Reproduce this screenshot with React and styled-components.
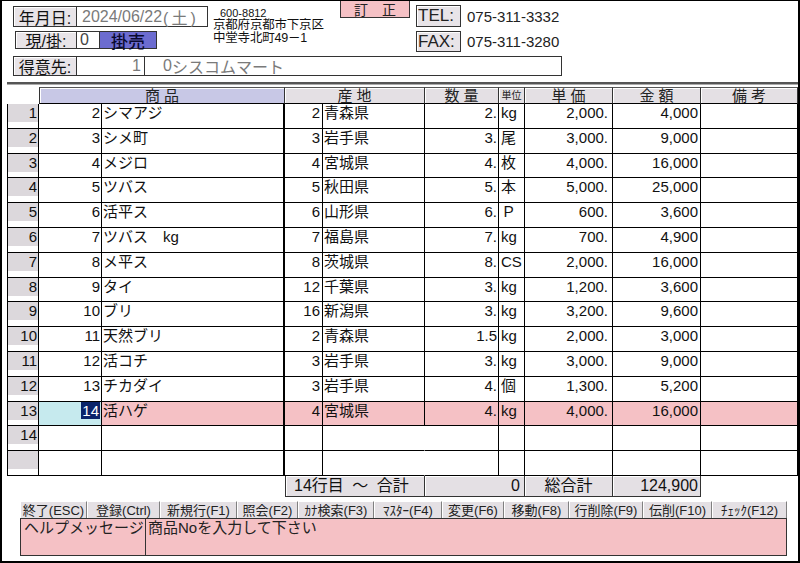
import React from 'react';
import styled, { createGlobalStyle } from 'styled-components';

const FONT = `"Liberation Sans", "Noto Sans CJK JP", sans-serif`;

const GlobalStyle = createGlobalStyle`
  html, body { margin: 0; padding: 0; background: #fff; }
  body { font-family: ${FONT}; }
  *, *::before, *::after { box-sizing: border-box; }
`;

const COLS = '32px 63px 183px 38px 102px 74px 26px 88px 88px 97px';

const Page = styled.div`
  width: 800px;
  height: 563px;
  border-style: solid;
  border-color: #000;
  border-width: 1px 2px 2px 2px;
  display: flex;
  flex-direction: column;
  font-family: ${FONT};
  color: #111;
  background: #fff;
  overflow: hidden;
`;

/* ---------- top area ---------- */
const UpperRow = styled.div`
  display: flex;
  align-items: flex-start;
  height: 51px;
`;

const LeftBlock = styled.div`
  display: flex;
  flex-direction: column;
  gap: 4px;
  width: 206px;
  padding: 5px 0 0 11px;
`;

const FieldRow = styled.div`
  display: flex;
  height: ${(p) => p.$h}px;
  margin-left: ${(p) => p.$ml || 0}px;
`;

const Label = styled.div`
  width: ${(p) => p.$w}px;
  height: 100%;
  background: #e8e4e8;
  border: 1px solid #333;
  box-shadow: inset 1px 1px 0 #fff;
  display: flex;
  align-items: center;
  justify-content: center;
  font-size: 16px;
  color: #111;
  white-space: nowrap;
`;

const ValueBox = styled.div`
  width: ${(p) => p.$w}px;
  height: 100%;
  background: ${(p) => p.$bg || '#fff'};
  border: 1px solid #333;
  border-left: none;
  display: flex;
  align-items: center;
  justify-content: ${(p) => p.$justify || 'flex-start'};
  padding: 0 ${(p) => p.$pr ?? 3}px 0 ${(p) => p.$pl ?? 3}px;
  font-size: ${(p) => p.$size || 16}px;
  font-weight: ${(p) => p.$weight || 400};
  color: ${(p) => p.$color || '#7a7a7a'};
  white-space: nowrap;
`;

const Paren = styled.span`
  letter-spacing: 3px;
  margin-left: 1px;
`;

const Address = styled.div`
  width: 127px;
  margin-left: 5px;
  padding-top: 6px;
  display: flex;
  flex-direction: column;
  color: #111;
  white-space: nowrap;
`;

const Zip = styled.div`
  font-size: 11px;
  line-height: 12px;
  padding-left: 7px;
`;

const AddrLine = styled.div`
  font-size: 12.5px;
  line-height: 13px;
  letter-spacing: -0.2px;
`;

const Correction = styled.div`
  width: 70px;
  height: 17px;
  background: #f5c1c5;
  border: 1px solid #333;
  border-top: none;
  display: flex;
  align-items: center;
  justify-content: center;
  font-size: 14px;
  color: #222;
`;

const TelBlock = styled.div`
  margin-left: 6px;
  padding-top: 4px;
  display: flex;
  flex-direction: column;
  gap: 4px;
`;

const TelRow = styled.div`
  display: flex;
  align-items: center;
  height: ${(p) => p.$h}px;
`;

const TelLabel = styled.div`
  width: 45px;
  height: 100%;
  background: #e8e4e8;
  border: 1px solid #333;
  box-shadow: inset 1px 1px 0 #fff;
  display: flex;
  align-items: center;
  padding-left: 1px;
  font-size: 17px;
  color: #222;
`;

const TelValue = styled.div`
  margin-left: 6px;
  font-size: 15px;
  color: #222;
`;

const CustomerRow = styled.div`
  display: flex;
  height: 20px;
  margin-top: 4px;
  padding-left: 11px;
`;

const CodePart = styled.span`
  display: inline-block;
  width: 27px;
  text-align: right;
`;

const Separator = styled.div`
  margin: 6px 0 0 5px;
  width: 791px;
  height: 3px;
  border-top: 2px solid #555;
  border-bottom: 1px solid #aaa;
`;

/* ---------- table ---------- */
const Table = styled.div`
  margin: 2px 0 0 5px;
  width: 791px;
  display: flex;
  flex-direction: column;
`;

const HeaderRow = styled.div`
  display: grid;
  grid-template-columns: ${COLS};
  height: 17px;
`;

const HeadBlank = styled.div``;

const HeadCell = styled.div`
  grid-column: span ${(p) => p.$span || 1};
  background: ${(p) => p.$bg || '#e4e0e4'};
  border-top: 1px solid #555;
  border-right: 1px solid #333;
  border-bottom: 1px solid #000;
  ${(p) => (p.$first ? 'border-left: 1px solid #333;' : '')}
  box-shadow: inset 1px 1px 0 #fff;
  display: flex;
  align-items: center;
  justify-content: center;
  font-size: ${(p) => (p.$small ? '10px' : '15px')};
  line-height: 1;
  color: #222;
  white-space: nowrap;
`;

const Row = styled.div`
  display: grid;
  grid-template-columns: ${COLS};
  height: 24.8px;
`;

const Cell = styled.div`
  border-right: ${(p) => (p.$noRight ? '1px solid transparent' : p.$thick ? '2px solid #000' : '1px solid #000')};
  border-bottom: 1px solid #000;
  ${(p) => (p.$left ? 'border-left: 1px solid #000;' : '')}
  background: ${(p) => p.$bg || '#fff'};
  text-align: ${(p) => p.$align || 'left'};
  padding: 0 ${(p) => p.$pr || 0}px 0 ${(p) => p.$pl || 0}px;
  font-size: 15px;
  line-height: 18px;
  white-space: nowrap;
  overflow: hidden;
  color: #111;
`;

const NumCell = styled(Cell)`
  background: linear-gradient(#dcd8dc 0 18px, #fff 18px);
`;

const Selected = styled.span`
  background: #0a246a;
  color: #fff;
  padding: 0 1px;
`;

const TotalsRow = styled.div`
  display: grid;
  grid-template-columns: ${COLS};
  height: 21px;
`;

const TotalBlank = styled.div`
  grid-column: span ${(p) => p.$span || 1};
`;

const TotalCell = styled.div`
  grid-column: span ${(p) => p.$span || 1};
  background: #e4e0e4;
  border-right: 1px solid #333;
  border-bottom: 1px solid #333;
  ${(p) => (p.$first ? 'border-left: 1px solid #333;' : '')}
  box-shadow: inset 1px 1px 0 #fff;
  font-size: 16px;
  line-height: 20px;
  text-align: ${(p) => p.$align || 'left'};
  padding: 0 ${(p) => p.$pr || 0}px 0 ${(p) => p.$pl || 0}px;
  word-spacing: ${(p) => p.$ws || 0}px;
  white-space: nowrap;
  color: #111;
`;

/* ---------- bottom ---------- */
const Toolbar = styled.div`
  display: flex;
  margin: 4px 0 0 18px;
  height: 17px;
`;

const ToolButton = styled.div`
  width: ${(p) => p.$w}px;
  background: #e4e0e4;
  border-left: 1px solid #fff;
  border-top: 1px solid #fff;
  border-right: 1px solid #808080;
  display: flex;
  align-items: center;
  justify-content: center;
  font-size: 13px;
  color: #222;
  white-space: nowrap;
`;

const Help = styled.div`
  display: flex;
  margin-left: 18px;
  width: 767px;
  height: 38px;
  background: #f5c1c5;
  border: 1px solid #333;
`;

const HelpLabel = styled.div`
  width: 125px;
  border-right: 1px solid #333;
  padding-left: 3px;
  font-size: 15px;
  line-height: 18px;
  color: #222;
  white-space: nowrap;
`;

const HelpText = styled.div`
  padding-left: 2px;
  font-size: 15px;
  line-height: 18px;
  color: #222;
  white-space: nowrap;
`;

const rows = [
  ['2', 'シマアジ', '2', '青森県', '2.', 'kg', '2,000.', '4,000'],
  ['3', 'シメ町', '3', '岩手県', '3.', '尾', '3,000.', '9,000'],
  ['4', 'メジロ', '4', '宮城県', '4.', '枚', '4,000.', '16,000'],
  ['5', 'ツバス', '5', '秋田県', '5.', '本', '5,000.', '25,000'],
  ['6', '活平ス', '6', '山形県', '6.', 'Ｐ', '600.', '3,600'],
  ['7', 'ツバス　kg', '7', '福島県', '7.', 'kg', '700.', '4,900'],
  ['8', 'メ平ス', '8', '茨城県', '8.', 'CS', '2,000.', '16,000'],
  ['9', 'タイ', '12', '千葉県', '3.', 'kg', '1,200.', '3,600'],
  ['10', 'ブリ', '16', '新潟県', '3.', 'kg', '3,200.', '9,600'],
  ['11', '天然ブリ', '2', '青森県', '1.5', 'kg', '2,000.', '3,000'],
  ['12', '活コチ', '3', '岩手県', '3.', 'kg', '3,000.', '9,000'],
  ['13', 'チカダイ', '3', '岩手県', '4.', '個', '1,300.', '5,200'],
  ['14', '活ハゲ', '4', '宮城県', '4.', 'kg', '4,000.', '16,000'],
];

const tools = [
  ['終了(ESC)', 67],
  ['登録(Ctrl)', 73],
  ['新規行(F1)', 77],
  ['照会(F2)', 61],
  ['ｶﾅ検索(F3)', 76],
  ['ﾏｽﾀｰ(F4)', 68],
  ['変更(F6)', 62],
  ['移動(F8)', 65],
  ['行削除(F9)', 74],
  ['伝削(F10)', 69],
  ['ﾁｪｯｸ(F12)', 75],
];

const PINK = '#f5c1c5';
const CYAN = '#c6eaee';

function DataRow({ index, data, active }) {
  const bg = active ? PINK : '#fff';
  if (!data) {
    return (
      <Row>
        <NumCell $left $align="right" $pr={1}>{index}</NumCell>
        <Cell />
        <Cell $thick />
        <Cell />
        <Cell $noRight />
        <Cell />
        <Cell />
        <Cell />
        <Cell />
        <Cell />
      </Row>
    );
  }
  const [code, name, pcode, pname, qty, unit, price, amount] = data;
  return (
    <Row>
      <NumCell $left $align="right" $pr={1}>{index}</NumCell>
      <Cell $align="right" $pr={1} $bg={active ? CYAN : '#fff'}>
        {active ? <Selected>{code}</Selected> : code}
      </Cell>
      <Cell $thick $pl={1} $bg={bg}>{name}</Cell>
      <Cell $align="right" $pr={2} $bg={bg}>{pcode}</Cell>
      <Cell $pl={1} $bg={bg}>{pname}</Cell>
      <Cell $align="right" $pr={1} $bg={bg}>{qty}</Cell>
      <Cell $pl={2} $bg={bg}>{unit}</Cell>
      <Cell $align="right" $pr={4} $bg={bg}>{price}</Cell>
      <Cell $align="right" $pr={2} $bg={bg}>{amount}</Cell>
      <Cell $bg={bg} />
    </Row>
  );
}

export default function App() {
  return (
    <>
      <GlobalStyle />
      <Page>
        <UpperRow>
          <LeftBlock>
            <FieldRow $h={21}>
              <Label $w={64}>年月日:</Label>
              <ValueBox $w={131} $pl={5}>
                2024/06/22<Paren>(土)</Paren>
              </ValueBox>
            </FieldRow>
            <FieldRow $h={18} $ml={2}>
              <Label $w={62}>現/掛:</Label>
              <ValueBox $w={23} $color="#444">0</ValueBox>
              <ValueBox $w={57} $bg="#6c6cd0" $color="#0a0a30" $justify="center" $weight={500} $size={17}>
                掛売
              </ValueBox>
            </FieldRow>
          </LeftBlock>
          <Address>
            <Zip>600-8812</Zip>
            <AddrLine>京都府京都市下京区</AddrLine>
            <AddrLine>中堂寺北町49－1</AddrLine>
          </Address>
          <Correction>訂　正</Correction>
          <TelBlock>
            <TelRow $h={22}>
              <TelLabel>TEL:</TelLabel>
              <TelValue>075-311-3332</TelValue>
            </TelRow>
            <TelRow $h={21}>
              <TelLabel>FAX:</TelLabel>
              <TelValue>075-311-3280</TelValue>
            </TelRow>
          </TelBlock>
        </UpperRow>
        <CustomerRow>
          <Label $w={64}>得意先:</Label>
          <ValueBox $w={68} $justify="flex-end" $pr={3}>1</ValueBox>
          <ValueBox $w={417} $pl={0}>
            <CodePart>0</CodePart>シスコムマート
          </ValueBox>
        </CustomerRow>
        <Separator />
        <Table>
          <HeaderRow>
            <HeadBlank />
            <HeadCell $span={2} $bg="#c8c8e6" $first>商 品</HeadCell>
            <HeadCell $span={2}>産 地</HeadCell>
            <HeadCell>数 量</HeadCell>
            <HeadCell $small>単位</HeadCell>
            <HeadCell>単 価</HeadCell>
            <HeadCell>金 額</HeadCell>
            <HeadCell>備 考</HeadCell>
          </HeaderRow>
          {rows.map((r, i) => (
            <DataRow key={i} index={String(i + 1)} data={r} active={i === 12} />
          ))}
          <DataRow index="14" />
          <DataRow index="" />
          <TotalsRow>
            <TotalBlank $span={3} />
            <TotalCell $span={2} $first $pl={8} $ws={4}>14行目 ～ 合計</TotalCell>
            <TotalCell $span={2} $align="right" $pr={4}>0</TotalCell>
            <TotalCell $align="center">総合計</TotalCell>
            <TotalCell $align="right" $pr={2}>124,900</TotalCell>
            <TotalBlank />
          </TotalsRow>
        </Table>
        <Toolbar>
          {tools.map(([t, w]) => (
            <ToolButton key={t} $w={w}>{t}</ToolButton>
          ))}
        </Toolbar>
        <Help>
          <HelpLabel>ヘルプメッセージ</HelpLabel>
          <HelpText>商品Noを入力して下さい</HelpText>
        </Help>
      </Page>
    </>
  );
}
